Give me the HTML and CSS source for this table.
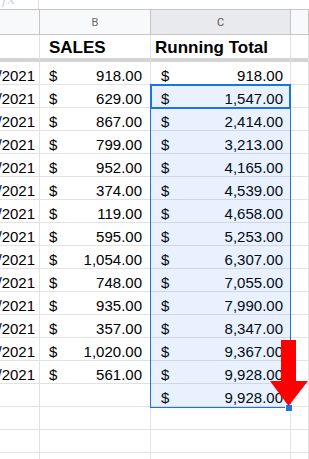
FILE: index.html
```html
<!DOCTYPE html>
<html>
<head>
<meta charset="utf-8">
<link rel="stylesheet" href="styles.css">
</head>
<body>
<div class="sheet">
  <div class="topbar"><span class="fx">fx</span><span class="divider"></span></div>
  <div class="row colhead">
    <div class="hc"></div><div class="hc">B</div><div class="hc sel-col">C</div><div class="hc"></div>
  </div>
  <div class="row title">
    <div class="c"></div><div class="c t tb">SALES</div><div class="c t tc">Running Total</div><div class="c"></div>
  </div>
  <div class="row"><div class="c d">1/4/2021</div><div class="c m"><span>$</span><span>918.00</span></div><div class="c m mc"><span>$</span><span>918.00</span></div><div class="c"></div></div>
  <div class="row"><div class="c d">1/5/2021</div><div class="c m"><span>$</span><span>629.00</span></div><div class="c m mc"><span>$</span><span>1,547.00</span></div><div class="c"></div></div>
  <div class="row"><div class="c d">1/6/2021</div><div class="c m"><span>$</span><span>867.00</span></div><div class="c m mc"><span>$</span><span>2,414.00</span></div><div class="c"></div></div>
  <div class="row"><div class="c d">1/7/2021</div><div class="c m"><span>$</span><span>799.00</span></div><div class="c m mc"><span>$</span><span>3,213.00</span></div><div class="c"></div></div>
  <div class="row"><div class="c d">1/8/2021</div><div class="c m"><span>$</span><span>952.00</span></div><div class="c m mc"><span>$</span><span>4,165.00</span></div><div class="c"></div></div>
  <div class="row"><div class="c d">1/9/2021</div><div class="c m"><span>$</span><span>374.00</span></div><div class="c m mc"><span>$</span><span>4,539.00</span></div><div class="c"></div></div>
  <div class="row"><div class="c d">1/1/2021</div><div class="c m"><span>$</span><span>119.00</span></div><div class="c m mc"><span>$</span><span>4,658.00</span></div><div class="c"></div></div>
  <div class="row"><div class="c d">1/1/2021</div><div class="c m"><span>$</span><span>595.00</span></div><div class="c m mc"><span>$</span><span>5,253.00</span></div><div class="c"></div></div>
  <div class="row"><div class="c d">1/1/2021</div><div class="c m"><span>$</span><span>1,054.00</span></div><div class="c m mc"><span>$</span><span>6,307.00</span></div><div class="c"></div></div>
  <div class="row"><div class="c d">1/1/2021</div><div class="c m"><span>$</span><span>748.00</span></div><div class="c m mc"><span>$</span><span>7,055.00</span></div><div class="c"></div></div>
  <div class="row"><div class="c d">1/1/2021</div><div class="c m"><span>$</span><span>935.00</span></div><div class="c m mc"><span>$</span><span>7,990.00</span></div><div class="c"></div></div>
  <div class="row"><div class="c d">1/1/2021</div><div class="c m"><span>$</span><span>357.00</span></div><div class="c m mc"><span>$</span><span>8,347.00</span></div><div class="c"></div></div>
  <div class="row"><div class="c d">1/1/2021</div><div class="c m"><span>$</span><span>1,020.00</span></div><div class="c m mc"><span>$</span><span>9,367.00</span></div><div class="c"></div></div>
  <div class="row"><div class="c d">1/1/2021</div><div class="c m"><span>$</span><span>561.00</span></div><div class="c m mc"><span>$</span><span>9,928.00</span></div><div class="c"></div></div>
  <div class="row"><div class="c d"></div><div class="c m"></div><div class="c m mc"><span>$</span><span>9,928.00</span></div><div class="c"></div></div>
  <div class="row"><div class="c"></div><div class="c"></div><div class="c"></div><div class="c"></div></div>
  <div class="row"><div class="c"></div><div class="c"></div><div class="c"></div><div class="c"></div></div>
  <div class="row"><div class="c"></div><div class="c"></div><div class="c"></div><div class="c"></div></div>

  <div class="range"></div>
  <div class="active"></div>
  <div class="handle"></div>
  <svg class="arrow" width="40" height="70" viewBox="0 0 40 70">
    <polygon points="11,0 26,0 26,41 38,41 18.5,66 0,41 11,41" fill="#ff0000"/>
  </svg>
</div>
</body>
</html>
```
FILE: styles.css
```css
* { box-sizing: border-box; }
html, body { margin: 0; padding: 0; background: #fff; overflow: hidden; }
body { width: 309px; height: 459px; }
.sheet {
  position: relative;
  width: 309px;
  height: 459px;
  overflow: hidden;
  font-family: "Liberation Sans", Arial, sans-serif;
  font-size: 15px;
  color: #000;
}
.topbar {
  height: 10px;
  display: flex;
  overflow: hidden;
  border-bottom: 1px solid #c4c4c4;
}
.fx {
  display: block;
  width: 38px;
  margin-top: -9px;
  padding-left: 2px;
  font-family: "DejaVu Serif", serif;
  font-style: italic;
  font-size: 14px;
  line-height: 16px;
  color: #d2d2d2;
}
.divider { width: 1px; height: 9px; background: #dcdcdc; }
.row {
  display: grid;
  grid-template-columns: 40px 111px 140px 18px;
  height: 23px;
}
.colhead { height: 25px; }
.hc {
  background: #f8f9fa;
  border-right: 1px solid #c4c4c4;
  border-bottom: 1px solid #c4c4c4;
  display: flex;
  align-items: center;
  justify-content: center;
  font-family: Roboto, "Liberation Sans", sans-serif;
  font-size: 11px;
  color: #6a6a6a;
  padding-top: 1px;
}
.hc.sel-col { background: #e8eaed; color: #555; }
.title { height: 27px; }
.title .c { border-bottom: 4px solid #d4d4d4; }
.c {
  border-right: 1px solid #e2e2e3;
  border-bottom: 1px solid #e2e2e3;
  display: flex;
  align-items: flex-end;
  white-space: nowrap;
  overflow: hidden;
  line-height: 17px;
}
.t { font-weight: bold; font-size: 17px; line-height: 20px; padding-bottom: 0; }
.tb { padding-left: 9px; }
.tc { padding-left: 4px; }
.d { justify-content: flex-end; padding-right: 4px; }
.m { justify-content: space-between; padding: 0 8px 0 9px; }
.mc { padding: 0 7px 0 10px; }
.range {
  position: absolute;
  left: 150px;
  top: 84px;
  width: 141px;
  height: 324px;
  border: 1px solid #1a73e8;
  background: rgba(26, 115, 232, 0.1);
}
.active {
  position: absolute;
  left: 150px;
  top: 84px;
  width: 141px;
  height: 25px;
  border: 2px solid #1a73e8;
}
.handle {
  position: absolute;
  left: 285px;
  top: 404px;
  width: 8px;
  height: 8px;
  background: #1a73e8;
  border: 1px solid #fff;
}
.arrow {
  position: absolute;
  left: 270px;
  top: 340px;
}
```
